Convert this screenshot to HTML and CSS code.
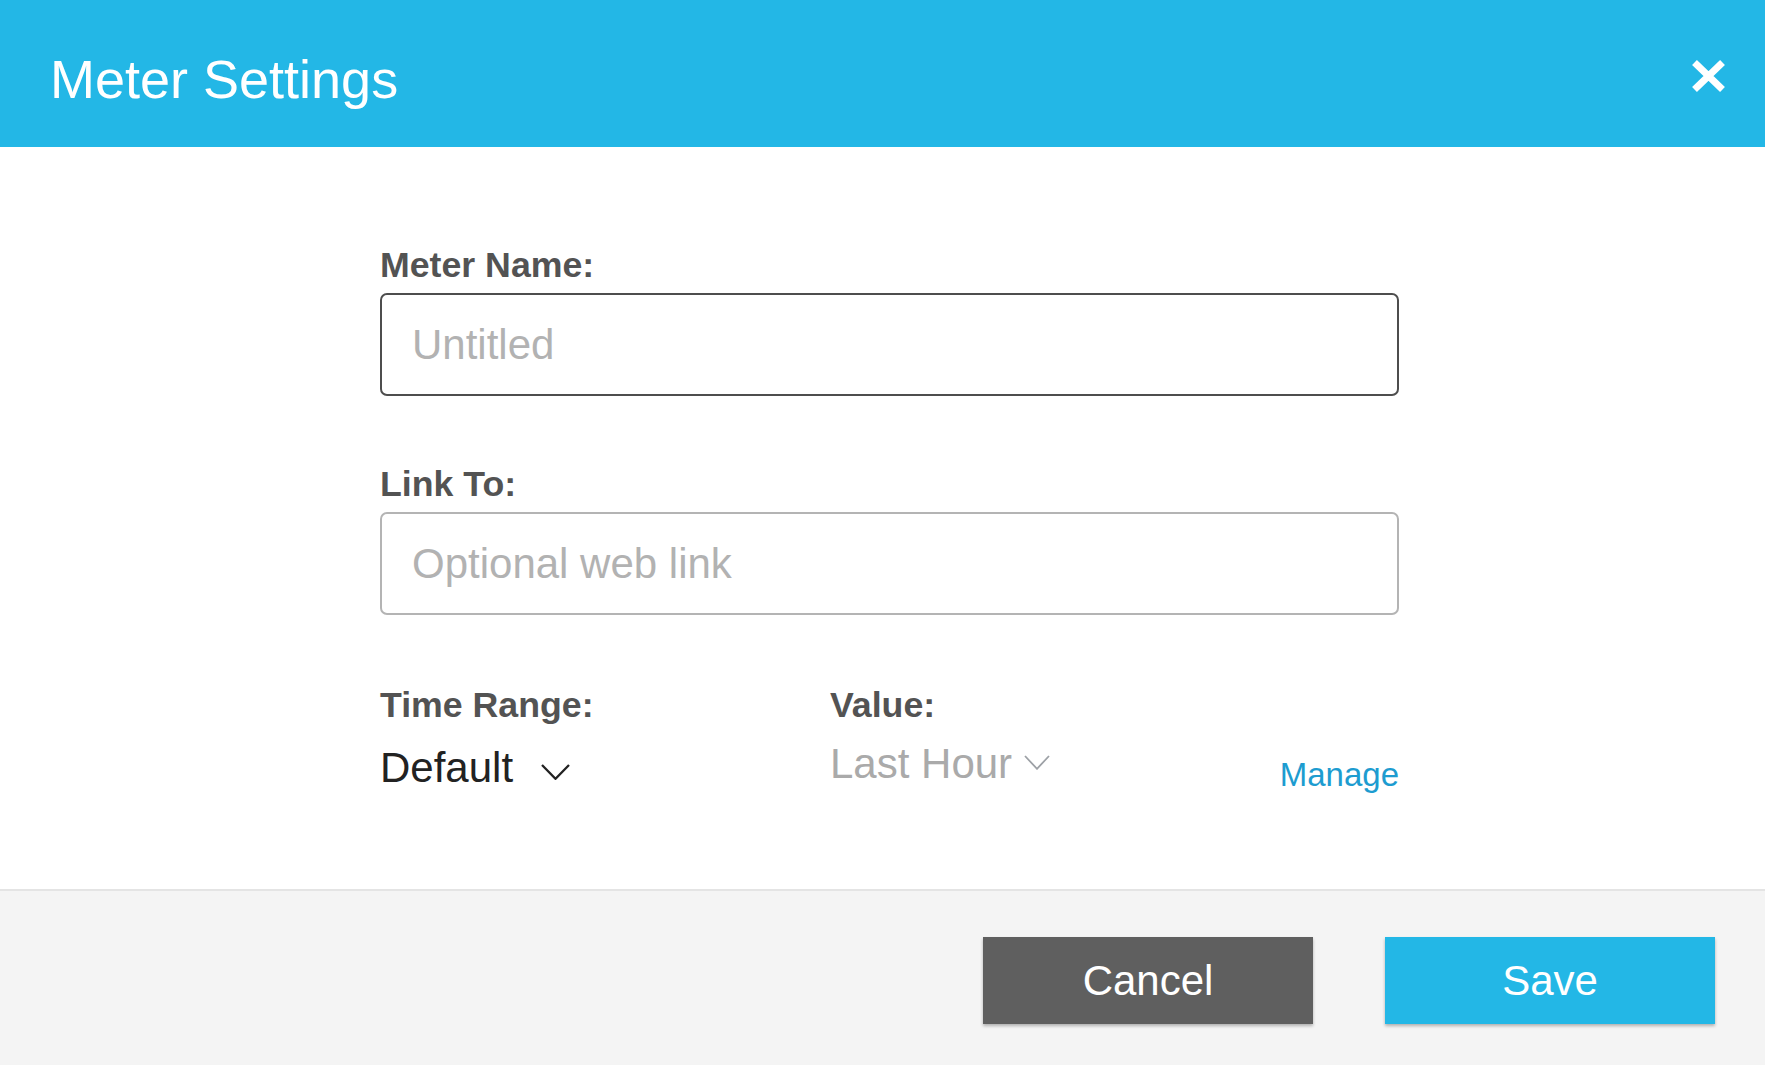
FILE: index.html
```html
<!DOCTYPE html>
<html lang="en">
<head>
<meta charset="utf-8">
<title>Meter Settings</title>
<link rel="stylesheet" href="styles.css">
</head>
<body>
<div class="dialog">
  <header class="header">
    <h1 class="title">Meter Settings</h1>
    <button class="close" type="button" aria-label="Close">
      <svg width="37" height="36" viewBox="0 0 37 36"><path d="M4.5 4.5 L32.5 31.5 M32.5 4.5 L4.5 31.5" stroke="#fff" stroke-width="7" fill="none"/></svg>
    </button>
  </header>
  <main class="content">
    <div class="form">
      <div class="field">
        <label class="label">Meter Name:</label>
        <input class="input input-dark" type="text" placeholder="Untitled">
      </div>
      <div class="field">
        <label class="label">Link To:</label>
        <input class="input input-light" type="text" placeholder="Optional web link">
      </div>
      <div class="row">
        <div class="col col-range">
          <div class="label">Time Range:</div>
          <div class="select select-range">
            <span>Default</span>
            <svg class="chev chev-range" width="29" height="16" viewBox="0 0 29 16"><polyline points="1,1 14.5,14.8 28,1" fill="none" stroke="#222" stroke-width="2.3"/></svg>
          </div>
        </div>
        <div class="col col-value">
          <div class="label">Value:</div>
          <div class="select select-value">
            <span>Last Hour</span>
            <svg class="chev chev-value" width="26" height="15" viewBox="0 0 26 15"><polyline points="1,1 13,13.8 25,1" fill="none" stroke="#9da1a6" stroke-width="1.8"/></svg>
          </div>
        </div>
        <a class="manage" href="#">Manage</a>
      </div>
    </div>
  </main>
  <footer class="footer">
    <button class="btn btn-cancel" type="button">Cancel</button>
    <button class="btn btn-save" type="button">Save</button>
  </footer>
</div>
</body>
</html>
```
FILE: styles.css
```css
* { box-sizing: border-box; }
html, body { margin: 0; padding: 0; }
body {
  font-family: "Liberation Sans", Arial, sans-serif;
  background: #fff;
}
.dialog {
  display: flex;
  flex-direction: column;
  height: 1065px;
}
.header {
  height: 147px;
  flex: none;
  background: #23b7e6;
  display: flex;
  align-items: center;
  justify-content: space-between;
  padding: 0 38px 0 50px;
}
.title {
  margin: 10px 0 0 0;
  font-size: 54px;
  line-height: 54px;
  font-weight: normal;
  color: #fff;
}
.close {
  margin-top: 4px;
  padding: 0;
  border: 0;
  background: transparent;
  display: flex;
  cursor: pointer;
}
.content {
  flex: 1;
  padding-top: 98px;
}
.form {
  width: 1019px;
  margin-left: 380px;
}
.field {
  margin-bottom: 68px;
}
.label {
  display: block;
  font-size: 35.7px;
  line-height: 40px;
  font-weight: bold;
  color: #535353;
}
.input {
  display: block;
  width: 100%;
  height: 103px;
  margin-top: 8px;
  padding: 0 30px;
  border-radius: 7px;
  font-family: "Liberation Sans", Arial, sans-serif;
  font-size: 42px;
  color: #333;
  background: #fff;
  outline: none;
}
.input::placeholder { color: #b2b2b2; }
.input-dark { border: 2.5px solid #4e4e4e; }
.input-light { border: 2.5px solid #b4b4b4; }
.row {
  display: flex;
  align-items: flex-start;
  padding-top: 2px;
}
.col-range { width: 450px; }
.col-value { flex: 1; }
.select {
  display: flex;
  align-items: flex-start;
  font-size: 42px;
  line-height: 48px;
}
.select-range { margin-top: 19px; color: #222; }
.select-value { margin-top: 15px; color: #aaa; }
.chev-range { margin: 20px 0 0 28px; }
.chev-value { margin: 15px 0 0 12px; }
.manage {
  margin-top: 70px;
  font-size: 33px;
  line-height: 40px;
  color: #1d9cd0;
  text-decoration: none;
}
.footer {
  flex: none;
  height: 176px;
  background: #f4f4f4;
  border-top: 2px solid #e4e4e4;
  display: flex;
  justify-content: flex-end;
  align-items: flex-start;
  gap: 72px;
  padding: 46px 50px 0 0;
}
.btn {
  width: 330px;
  height: 87px;
  border: 0;
  border-radius: 0;
  color: #fff;
  font-family: "Liberation Sans", Arial, sans-serif;
  font-size: 42px;
  box-shadow: 0 2px 3px rgba(0, 0, 0, 0.28);
  cursor: pointer;
}
.btn-cancel { background: #5f5f5f; }
.btn-save { background: #23b7e6; }
```
